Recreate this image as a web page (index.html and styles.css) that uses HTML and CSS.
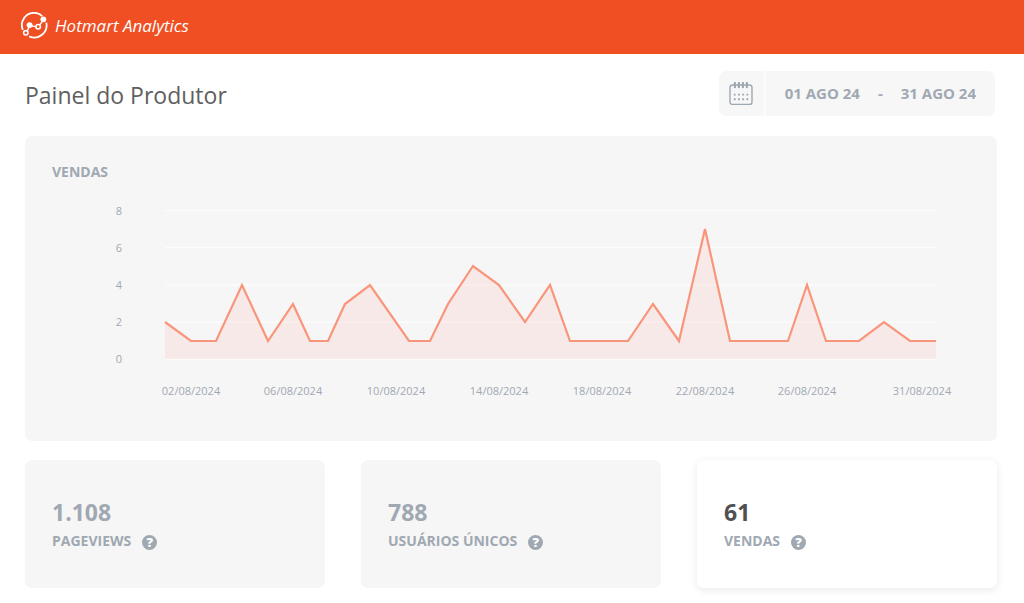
FILE: index.html
```html
<!DOCTYPE html>
<html lang="pt-BR">
<head>
<meta charset="utf-8">
<meta name="viewport" content="width=device-width, initial-scale=1">
<title>Hotmart Analytics</title>
<link rel="stylesheet" href="styles.css">
</head>
<body>
<header class="topbar">
  <a class="brand" href="#">
    <svg class="brand-icon" viewBox="0 0 28 28" aria-hidden="true">
      <g fill="none" stroke="#fff" stroke-width="1.9">
        <path d="M1.9 18.5A12.6 12.6 0 0 1 22 4.2"/>
        <path d="M26.2 11A12.6 12.6 0 0 1 8.5 25.2"/>
        <path d="M6.2 20.1L9.2 14.2L16 15.2M19.3 13.6L23.2 8.2" stroke-width="1.5"/>
        <circle cx="5" cy="21.6" r="2.3" stroke-width="1.6"/>
        <circle cx="17.8" cy="15.2" r="2.3" stroke-width="1.6"/>
      </g>
      <circle cx="8.9" cy="13.6" r="3.1" fill="#fff"/>
      <circle cx="23.2" cy="7.6" r="3" fill="#fff"/>
    </svg>
    <span class="brand-name">Hotmart Analytics</span>
  </a>
</header>

<main class="page">
  <div class="page-head">
    <h1 class="page-title">Painel do Produtor</h1>
    <div class="range">
      <button class="range-icon" type="button" aria-label="Abrir calendário">
        <svg class="calendar" viewBox="0 0 24 24" aria-hidden="true">
          <rect x="1" y="3" width="22" height="19.4" rx="2.5" fill="none" stroke="#a0a8b2" stroke-width="1.4"/>
          <path d="M5.9 1v4.2M9.9 1v4.2M13.9 1v4.2M17.9 1v4.2" stroke="#a0a8b2" stroke-width="2.2" stroke-linecap="round"/>
          <path d="M4.8 12.6h15.2M4.8 17.2h15.2" stroke="#a0a8b2" stroke-width="1.9" stroke-dasharray="1.9 2.3"/>
        </svg>
      </button>
      <div class="range-dates">
        <button class="range-date" type="button">01 AGO 24</button>
        <span>-</span>
        <button class="range-date" type="button">31 AGO 24</button>
      </div>
    </div>
  </div>

  <section class="chart-card">
    <h2 class="label">VENDAS</h2>
    <svg class="chart" viewBox="0 0 918 220" role="img" aria-label="Vendas por dia">
      <path class="grid" d="M113 14.5H884M113 51.5H884M113 89H884M113 126H884M113 163H884"/>
      <path class="area" d="M113 163V126L139 145H164L190 89L216 145L241 108L258 145H276L293 108L318 89L357 145H378L396 108L421 70L447 89L473 126L498 89L518 145H576L601 108L627 145L653 33L678 145H736L755 89L774 145H807L832 126L858 145H884V163Z"/>
      <path class="line" d="M113 126L139 145H164L190 89L216 145L241 108L258 145H276L293 108L318 89L357 145H378L396 108L421 70L447 89L473 126L498 89L518 145H576L601 108L627 145L653 33L678 145H736L755 89L774 145H807L832 126L858 145H884"/>
      <g class="tick tick-y">
        <text x="70" y="19">8</text>
        <text x="70" y="56">6</text>
        <text x="70" y="93">4</text>
        <text x="70" y="130">2</text>
        <text x="70" y="167">0</text>
      </g>
      <g class="tick tick-x">
        <text x="139" y="199">02/08/2024</text>
        <text x="241" y="199">06/08/2024</text>
        <text x="344" y="199">10/08/2024</text>
        <text x="447" y="199">14/08/2024</text>
        <text x="550" y="199">18/08/2024</text>
        <text x="653" y="199">22/08/2024</text>
        <text x="755" y="199">26/08/2024</text>
        <text x="870" y="199">31/08/2024</text>
      </g>
    </svg>
  </section>

  <section class="stats">
    <article class="stat">
      <p class="stat-value">1.108</p>
      <div class="stat-row">
        <h2 class="label">PAGEVIEWS</h2>
        <button class="help" type="button" aria-label="Ajuda sobre pageviews">?</button>
      </div>
    </article>
    <article class="stat">
      <p class="stat-value">788</p>
      <div class="stat-row">
        <h2 class="label">USUÁRIOS ÚNICOS</h2>
        <button class="help" type="button" aria-label="Ajuda sobre usuários únicos">?</button>
      </div>
    </article>
    <article class="stat stat-active">
      <p class="stat-value">61</p>
      <div class="stat-row">
        <h2 class="label">VENDAS</h2>
        <button class="help" type="button" aria-label="Ajuda sobre vendas">?</button>
      </div>
    </article>
  </section>
</main>
</body>
</html>
```
FILE: styles.css
```css
* {
  box-sizing: border-box;
}

body {
  margin: 0;
  background: #fff;
  color: #606060;
  font-family: "Open Sans", "Noto Sans", sans-serif;
}

h1, h2, p {
  margin: 0;
}

button {
  padding: 0;
  border: 0;
  background: none;
  color: inherit;
  font: inherit;
  cursor: pointer;
}

.topbar {
  display: flex;
  align-items: center;
  height: 54px;
  padding: 0 21px 3px;
  background: #f04e23;
}

.brand {
  display: flex;
  align-items: center;
  gap: 7px;
  color: #fff;
  text-decoration: none;
}

.brand-icon {
  width: 27px;
  height: 27px;
}

.brand-name {
  font-size: 17px;
  font-style: italic;
  font-weight: 500;
  line-height: 24px;
}

.page {
  padding: 17px 27px 15px 25px;
}

.page-head {
  display: flex;
  justify-content: space-between;
  align-items: center;
  margin-bottom: 20px;
  padding-right: 2px;
}

.page-title {
  padding-top: 2px;
  font-size: 23px;
  font-weight: 400;
  line-height: 32px;
}

.range {
  display: flex;
  height: 45px;
  border-radius: 7px;
  background: #f7f7f7;
  color: #a0a8b2;
}

.range-icon {
  display: grid;
  place-items: center;
  width: 47px;
  border-right: 2px solid #fcfcfc;
}

.calendar {
  width: 24px;
  height: 24px;
}

.range-dates {
  display: flex;
  align-items: center;
  gap: 18px;
  padding: 0 19px 2px;
  font-size: 15px;
  font-weight: 700;
}

.chart-card {
  padding: 26px 27px 25px;
  border-radius: 7px;
  background: #f6f6f6;
}

.label {
  color: #a0a8b2;
  font-size: 14px;
  font-weight: 700;
  line-height: 20px;
}

.chart {
  display: block;
  width: 100%;
  margin-top: 14px;
}

.grid {
  fill: none;
  stroke: #fcfcfc;
  stroke-width: 1.5;
}

.area {
  fill: #f48c78;
  fill-opacity: 0.12;
}

.line {
  fill: none;
  stroke: #f9957a;
  stroke-width: 2.2;
}

.tick {
  fill: #a2a8b3;
  font-size: 11px;
}

.tick-y {
  text-anchor: end;
}

.tick-x {
  text-anchor: middle;
}

.stats {
  display: grid;
  grid-template-columns: repeat(3, 1fr);
  gap: 36px;
  margin-top: 19px;
}

.stat {
  padding: 36px 27px 35px;
  border-radius: 7px;
  background: #f6f6f6;
}

.stat-value {
  color: #a0a8b2;
  font-size: 23px;
  font-weight: 700;
  line-height: 32px;
}

.stat-active {
  background: #fff;
  box-shadow: 0 2px 9px rgba(0, 0, 0, 0.09);
}

.stat-active .stat-value {
  color: #505052;
}

.stat-row {
  display: flex;
  align-items: center;
  gap: 11px;
  padding-top: 3px;
}

.stat-row .label {
  margin-bottom: 2px;
}

.help {
  width: 15px;
  height: 15px;
  border-radius: 50%;
  background: #a0a8b2;
  color: #fff;
  font-size: 13px;
  font-weight: 800;
  line-height: 15px;
  text-align: center;
}
```
